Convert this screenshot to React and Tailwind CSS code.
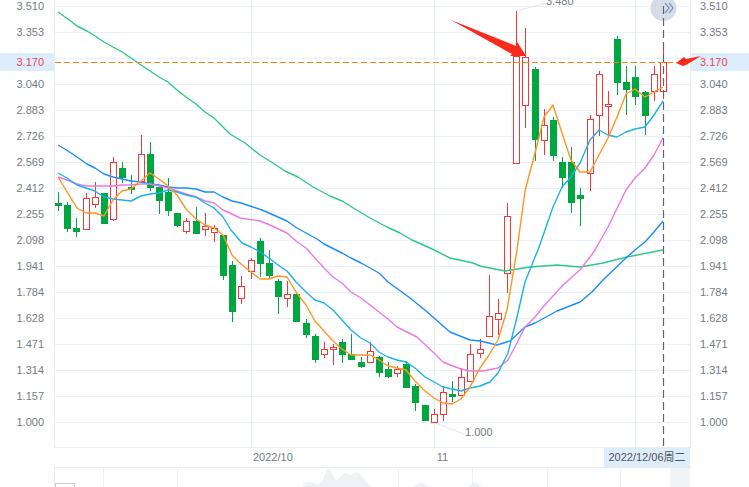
const upper = ['3.510', '3.353', '', '3.040', '2.883', '2.726', '2.569', '2.412', '2.255', '2.098', '1.941', '1.784', '1.628', '1.471', '1.314', '1.157', '1.000']

// [color, x, body top, body bottom, wick top, wick bottom]
const candles = [
  ['g', 58, 203, 206, 192, 211], ['g', 67, 205, 229, 202, 232], ['g', 76, 228, 232, 218, 237],
  ['r', 86, 198, 229, 193, 229], ['r', 95, 197, 204, 182, 208], ['g', 104, 193, 224, 193, 224],
  ['r', 113, 162, 219, 157, 221], ['g', 122, 168, 178, 162, 183], ['g', 131, 187, 190, 175, 194],
  ['r', 141, 154, 181, 135, 183], ['g', 150, 154, 188, 142, 191], ['g', 159, 187, 201, 187, 214],
  ['g', 168, 192, 211, 178, 216], ['g', 177, 213, 226, 213, 227], ['r', 186, 221, 231, 218, 234],
  ['g', 196, 221, 234, 207, 234], ['r', 205, 226, 229, 213, 236], ['r', 214, 228, 232, 225, 242],
  ['g', 223, 235, 276, 235, 280], ['g', 232, 265, 312, 261, 322], ['r', 241, 286, 298, 276, 304],
  ['r', 251, 260, 271, 258, 279], ['g', 260, 241, 264, 238, 277], ['g', 269, 263, 276, 250, 279],
  ['g', 278, 281, 297, 279, 314], ['r', 287, 294, 298, 281, 307], ['g', 296, 294, 322, 294, 322],
  ['g', 306, 323, 335, 319, 338], ['g', 315, 336, 360, 334, 363], ['r', 324, 349, 354, 342, 358],
  ['r', 333, 347, 349, 344, 365], ['g', 342, 342, 355, 339, 363], ['g', 351, 354, 360, 334, 360],
  ['g', 361, 362, 367, 357, 368], ['r', 370, 351, 362, 342, 362], ['g', 379, 357, 373, 356, 377],
  ['g', 388, 369, 377, 362, 378], ['r', 397, 369, 373, 366, 377], ['g', 406, 364, 388, 361, 388],
  ['g', 415, 386, 403, 384, 411], ['g', 425, 405, 421, 405, 421], ['r', 434, 414, 422, 409, 422],
  ['r', 443, 392, 414, 386, 421], ['g', 452, 394, 397, 381, 402], ['r', 461, 377, 395, 368, 395],
  ['r', 470, 354, 381, 344, 381], ['r', 480, 349, 353, 339, 358], ['r', 489, 316, 336, 275, 336],
  ['r', 498, 313, 319, 299, 335], ['r', 507, 216, 273, 203, 293], ['r', 516, 56, 163, 11, 163],
  ['r', 525, 57, 105, 28, 128], ['g', 535, 69, 140, 67, 161], ['r', 544, 125, 140, 109, 155],
  ['g', 553, 120, 156, 117, 161], ['g', 562, 162, 178, 157, 188], ['g', 571, 162, 203, 147, 213],
  ['g', 580, 195, 199, 188, 226], ['r', 590, 119, 173, 115, 191], ['r', 599, 74, 115, 71, 136],
  ['r', 608, 104, 106, 91, 137], ['g', 617, 39, 83, 36, 95], ['g', 626, 82, 90, 66, 115],
  ['g', 635, 77, 97, 66, 105], ['g', 645, 92, 116, 91, 135], ['r', 654, 74, 91, 66, 101],
  ['r', 663, 62, 91, 50, 99],
]

const averages = [
  {
    color: '#2cc886',
    points: '58,12 68,19 77,26 87,31 95,36 104,42 113,47 122,52 131,58 141,65 150,71 159,77 168,82 177,90 186,97 196,104 205,112 214,118 223,127 230,134 245,143 260,155 273,163 285,171 298,177 313,187 330,196 342,201 355,209 370,218 387,227 400,233 412,240 430,248 450,258 473,263 480,266 505,271 530,267 557,265 580,267 603,263 627,257 663,250',
  },
  {
    color: '#1a8cff',
    points: '58,145 68,151 77,157 87,164 95,168 104,174 113,177 122,179 131,181 141,182 150,184 159,185 168,187 177,188 186,188 196,189 205,192 214,192 223,197 232,201 241,203 250,206 262,210 287,221 297,228 317,239 324,244 342,253 351,258 361,263 379,273 388,282 406,295 415,302 425,310 434,318 450,332 470,340 480,341 497,345 510,341 525,327 535,323 557,311 580,302 592,292 603,280 627,257 635,250 645,242 654,232 663,221',
  },
  {
    color: '#ea7ae2',
    points: '58,177 67,180 77,184 86,186 95,186 104,186 113,186 122,185 131,185 141,184 150,184 159,186 168,188 177,191 186,194 196,197 205,201 214,203 223,210 230,213 240,218 260,221 270,225 287,233 296,241 306,248 315,258 324,268 333,277 342,283 351,292 361,298 370,305 379,312 388,319 397,327 417,337 434,353 443,362 453,366 461,369 470,371 483,371 498,368 508,360 517,343 525,327 535,317 543,307 563,285 580,270 590,257 595,250 608,227 626,190 635,178 645,168 654,155 663,138',
  },
  {
    color: '#1bb2ea',
    points: '58,173 67,178 77,185 86,188 95,191 104,197 113,199 122,200 131,201 141,196 150,194 159,193 168,190 177,192 186,195 196,197 205,203 214,208 223,217 231,230 242,243 251,247 260,252 269,258 278,265 287,271 296,282 306,292 315,300 324,303 333,310 342,320 351,330 361,338 370,343 379,352 388,357 397,360 406,362 415,368 425,377 434,382 443,387 452,389 461,391 470,388 480,386 490,382 498,373 508,353 517,317 525,282 535,257 538,250 553,207 562,187 571,177 580,163 590,140 599,130 608,135 617,137 626,132 635,129 645,127 654,115 663,101',
  },
  {
    color: '#ff9526',
    points: '58,177 77,208 86,213 95,213 104,216 113,200 122,191 131,189 141,181 150,173 159,179 168,186 177,195 186,209 196,219 205,225 214,228 223,235 232,255 242,265 251,272 260,279 269,279 278,276 287,277 296,292 306,305 315,321 324,331 333,341 342,349 351,355 361,355 370,355 379,360 388,366 397,368 406,370 415,381 425,391 434,398 443,403 452,404 461,399 470,387 480,368 489,355 498,340 507,310 517,250 525,191 535,153 544,117 553,105 562,133 571,160 580,172 590,172 599,155 608,138 617,117 626,94 635,89 645,97 654,92 663,87',
  },
]

function CandleChart() {
  const rows = upper.map((_, i) => 6.5 + i * 26)
  return (
    <svg viewBox="55 0 635 447" className="block h-[447px] w-[635px]">
      {rows.map((y) => (
        <line key={y} x1="55" x2="690" y1={y} y2={y} stroke="#eaf0f6" strokeWidth="1.2" />
      ))}
      {[251.5, 434.5, 635.5].map((x) => (
        <line key={x} x1={x} x2={x} y1="0" y2="447" stroke="#eaf0f6" strokeWidth="1.2" />
      ))}
      <path d="M516.5 11 L546 3" fill="none" stroke="#e3e6ea" />
      <path d="M434 422.5 L464 434" fill="none" stroke="#e3e6ea" />
      {candles.map(([c, x, top, bottom, wickTop, wickBottom]) => {
        const color = c === 'g' ? '#00a63f' : '#f23838'
        return (
          <g key={x}>
            <line x1={x + 0.5} x2={x + 0.5} y1={wickTop} y2={wickBottom} stroke={color} />
            {c === 'g' ? (
              <rect x={x - 3} y={top} width="7" height={bottom - top} fill={color} />
            ) : (
              <rect x={x - 2.5} y={top + 0.5} width="6" height={bottom - top} fill="#fff" stroke={color} />
            )}
          </g>
        )
      })}
      {averages.map((a) => (
        <polyline key={a.color} points={a.points} fill="none" stroke={a.color} strokeWidth="1.4" strokeLinejoin="round" />
      ))}
      <line x1="55" x2="690" y1="62.5" y2="62.5" stroke="#ff8416" strokeWidth="1.2" strokeDasharray="6 3" />
      <circle cx="663.5" cy="8" r="13" fill="#d3dce8" />
      <path d="M665 3 L669 8 L665 13 M669 3 L673 8 L669 13" fill="none" stroke="#6f89ab" strokeWidth="1.2" />
      <line x1="663.5" x2="663.5" y1="6" y2="447" stroke="#5f6670" strokeWidth="1.2" strokeDasharray="8 4" />
    </svg>
  )
}

function Navigator() {
  return (
    <div className="relative h-[20px] border-t border-l border-[#e4eaf1]">
      <svg viewBox="55 468 635 19" className="block h-[19px] w-[635px]">
        <path
          d="M303 487 L305 482 L312 482 L317 484 L322 482 L327 470 L330 469 L333 475 L336 481 L340 477 L345 473 L350 475 L358 472 L363 478 L368 484 L372 487 Z M413 487 L420 482 L427 486 L436 487 Z M467 487 L475 482 L482 487 Z"
          fill="#eef1f5"
        />
        {[103.5, 177.5, 398.5, 472.5, 547.5, 620.5].map((x) => (
          <line key={x} x1={x} x2={x} y1="468" y2="487" stroke="#edf2f7" />
        ))}
      </svg>
      <div className="absolute left-0 top-[15px] h-[6px] w-[20px] border border-[#c9cdd3]" />
      <div className="absolute right-[1px] top-0 h-[20px] w-[20px] bg-[#f2f3f5]" />
    </div>
  )
}

export default function App() {
  return (
    <div className="relative flex h-[487px] w-[749px] overflow-hidden bg-white font-['Liberation_Sans','Noto_Sans_CJK_SC',sans-serif] text-[11px] text-[#747b88]">
      <div className="relative w-[54px] shrink-0">
        <div className="-mt-[7px] pr-[10px] text-right">
          {upper.map((label, i) => (
            <div key={i} className="h-[26px] leading-[26px]">{label}</div>
          ))}
        </div>
        <div className="absolute left-0 top-[53px] h-[18px] w-full bg-[#deedfc] pr-[10px] text-right leading-[18px] text-[#f0414f]">3.170</div>
      </div>

      <div className="w-[637px] shrink-0">
        <div className="relative h-[448px] border-x border-b border-[#e8edf4]">
          <CandleChart />
          <span className="absolute left-[491px] top-[-5px] leading-[13px]">3.480</span>
          <span className="absolute left-[410px] top-[426px] leading-[13px]">1.000</span>
        </div>
        <div className="flex h-[19px] items-center">
          <span className="ml-[199px]">2022/10</span>
          <span className="ml-[144px]">11</span>
          <span className="ml-auto mr-[1px] flex h-full w-[86px] items-center justify-center bg-[#deedfc] text-[#50555e]">2022/12/06周二</span>
        </div>
        <Navigator />
      </div>

      <div className="relative flex-1 pl-[9px]">
        <div className="-mt-[7px]">
          {upper.map((label, i) => (
            <div key={i} className="h-[26px] leading-[26px]">{label}</div>
          ))}
        </div>
        <div className="absolute left-0 top-[53px] h-[18px] w-full bg-[#deedfc] pl-[9px] leading-[18px] text-[#f0414f]">3.170</div>
      </div>

      <svg viewBox="0 0 749 487" className="pointer-events-none absolute left-0 top-0 h-[487px] w-[749px]">
        <polygon points="451,20 516,46 516,40 526,56 510,56 512,54" fill="#fb2a1c" />
        <polygon points="676,63 684,57 686,59 701,56 686,65 683,66" fill="#fb2a1c" />
      </svg>
    </div>
  )
}
